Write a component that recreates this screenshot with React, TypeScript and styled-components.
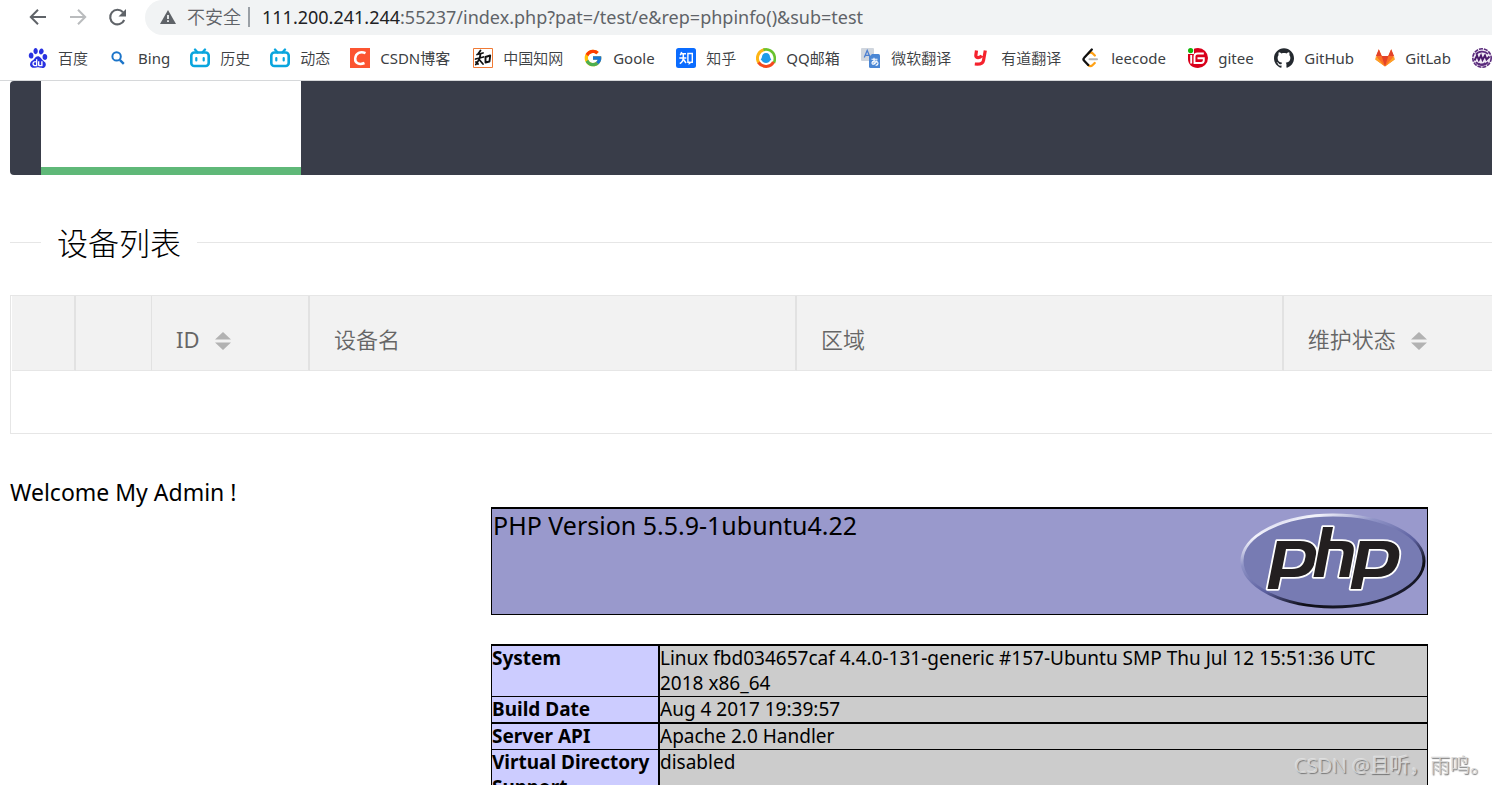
import React from "react";
import styled, { createGlobalStyle } from "styled-components";
import { FcGoogle } from "react-icons/fc";
import { SiBaidu, SiGithub } from "react-icons/si";

const GlobalStyle = createGlobalStyle`
  *, *::before, *::after { box-sizing: border-box; }
  body {
    margin: 0;
    background: #fff;
    color: #000;
    font-family: "Noto Sans", "Noto Sans CJK SC", sans-serif;
  }
`;

const Window = styled.div`
  display: flex;
  flex-direction: column;
  height: 100vh;
  overflow: hidden;
  position: relative;
`;

const AddressRow = styled.header`
  display: flex;
  align-items: center;
  flex: none;
  height: 35px;
  padding-left: 28px;
  gap: 20px;
`;

const ToolButton = styled.button<{ $dim?: boolean }>`
  display: flex;
  width: 20px;
  height: 20px;
  padding: 0;
  border: 0;
  background: none;
  color: ${(p) => (p.$dim ? "#babcbe" : "#5f6368")};
`;

const Omnibox = styled.div`
  display: flex;
  align-items: center;
  flex: 1;
  align-self: stretch;
  min-width: 0;
  margin-left: -3px;
  padding: 0 0 2px 14px;
  border-radius: 18px 0 0 18px;
  background: #f1f3f4;
  color: #5f6368;
  font-size: 18px;
  line-height: 24px;
  white-space: nowrap;
`;

const Security = styled.button`
  display: flex;
  align-items: center;
  gap: 10px;
  padding: 0 7px 0 0;
  border: 0;
  border-right: 2px solid #9aa0a6;
  height: 20px;
  background: none;
  color: inherit;
  font: inherit;
  font-weight: 350;
`;

const Url = styled.div`
  margin-left: 12px;
  outline: 0;
`;

const Host = styled.span`
  color: #202124;
`;

const Bookmarks = styled.nav`
  display: flex;
  align-items: center;
  flex: none;
  gap: 20px;
  height: 46px;
  padding-left: 28px;
  border-bottom: 1px solid #d6d8da;
  overflow: hidden;
`;

const Bookmark = styled.a`
  display: flex;
  align-items: center;
  flex: none;
  gap: 10px;
  color: #3c4043;
  font-size: 15px;
  line-height: 20px;
  text-decoration: none;
  white-space: nowrap;

  svg { flex: none; width: 20px; height: 20px; }
`;

const BookmarkLabel = styled.span<{ $width: number; $latin: boolean }>`
  min-width: ${(p) => p.$width}px;
  font-weight: ${(p) => (p.$latin ? 400 : 350)};
`;

const Page = styled.main`
  flex: 1;
  min-height: 0;
  padding-left: 10px;
  overflow: hidden;
`;

const NavBar = styled.div`
  display: flex;
  height: 94px;
  padding-left: 31px;
  border-radius: 4px 0 0 4px;
  background: #393d49;
`;

const NavTab = styled.div`
  width: 260px;
  border-bottom: 8px solid #5fb878;
  background: #fff;
`;

const SectionTitle = styled.h2`
  display: flex;
  align-items: center;
  gap: 16px;
  margin: 47px 0 0;
  height: 41px;
  font-size: 31px;
  font-weight: 300;
  line-height: 40px;

  &::before, &::after { content: ""; height: 1px; background: #e6e6e6; }
  &::before { width: 31px; }
  &::after { flex: 1; }
`;

const DeviceFrame = styled.section`
  height: 139px;
  margin-top: 32px;
  padding-left: 1px;
  border: 1px solid #e6e6e6;
  border-right: 0;
`;

const DeviceTable = styled.table`
  width: 100%;
  table-layout: fixed;
  border-spacing: 0;
`;

const Head = styled.th<{ $line?: number; $latin?: boolean }>`
  height: 75px;
  padding: 12px 24px 0;
  border-right: ${(p) => p.$line ?? 2}px solid #e2e2e2;
  border-bottom: 1px solid #e6e6e6;
  background: #f2f2f2;
  color: #666;
  font-size: 22px;
  font-weight: ${(p) => (p.$latin ? 400 : 350)};
  line-height: 30px;
  text-align: left;
  white-space: nowrap;
`;

const HeadLabel = styled.span`
  display: flex;
  align-items: center;
  gap: 15px;
`;

const SortButton = styled.button`
  display: flex;
  padding: 4px 0 0;
  border: 0;
  background: none;
`;

const Welcome = styled.p`
  margin: 43px 0 0;
  font-size: 23px;
  line-height: 30px;
`;

const Info = styled.section`
  display: flex;
  flex-direction: column;
  align-items: flex-end;
  gap: 29px;
  padding-right: 64px;
`;

const Version = styled.div`
  display: flex;
  justify-content: space-between;
  width: 100%;
  max-width: 937px;
  height: 108px;
  padding-left: 1px;
  border: 1px solid #000;
  border-top-width: 2px;
  background: #9999cc;

  svg { margin-top: 4px; flex: none; }
`;

const VersionTitle = styled.h1`
  margin: 0;
  font-size: 25px;
  font-weight: 400;
  line-height: 32px;
`;

const InfoTable = styled.table`
  width: 100%;
  max-width: 937px;
  table-layout: fixed;
  border-spacing: 0;
  border: 1px solid #000;
  border-top-width: 2px;
  font-size: 19px;
  line-height: 25px;
  text-align: left;
`;

const InfoRow = styled.tr<{ $line: number }>`
  th, td {
    padding: 0;
    border-bottom: ${(p) => p.$line}px solid #000;
    vertical-align: top;
  }
  th { border-right: 2px solid #000; background: #ccccff; font-weight: 700; }
  td { padding-right: 8px; background: #cccccc; }
`;

const Watermark = styled.div`
  position: absolute;
  right: 2px;
  bottom: 5px;
  color: rgba(215, 215, 215, 0.9);
  font-size: 20px;
  font-weight: 350;
  line-height: 28px;
  text-shadow: 1px 1px 1px rgba(90, 90, 90, 0.8), -1px -1px 0 rgba(255, 255, 255, 0.4);
  white-space: nowrap;
`;

const Icon = ({ children }: { children: React.ReactNode }) => (
  <svg width="20" height="20" viewBox="0 0 20 20" fill="none" aria-hidden="true">
    {children}
  </svg>
);

const BackIcon = () => (
  <Icon><path d="M18 9H3M10 1.800 2.800 9l7.200 7.200" stroke="currentColor" strokeWidth="2" /></Icon>
);
const ForwardIcon = () => (
  <Icon><path d="M2 9h15M10 1.800l7.200 7.200-7.200 7.200" stroke="currentColor" strokeWidth="2" /></Icon>
);
const ReloadIcon = () => (
  <Icon>
    <path d="M16.200 12A7.300 7.300 0 1 1 15 4.300" stroke="currentColor" strokeWidth="2.100" />
    <path d="M18 1v7.500h-7.500z" fill="currentColor" />
  </Icon>
);
const WarningIcon = () => (
  <svg width="18" height="16" viewBox="0 0 18 16" aria-hidden="true">
    <path d="M9 1 17 15H1z" fill="#5f6368" />
    <path d="M8.1 6h1.800v4H8.100zM8.100 11.300h1.800v1.800H8.100z" fill="#f1f3f4" />
  </svg>
);

const SearchIcon = () => (
  <Icon>
    <circle cx="8.600" cy="8.400" r="4.200" stroke="#1b74c9" strokeWidth="2" />
    <path d="m11.800 11.800 4 4" stroke="#1b74c9" strokeWidth="2.400" />
  </Icon>
);
const TvIcon = () => (
  <Icon>
    <path d="m5 1.500 2.600 3M15 1.500l-2.600 3" stroke="#09a5de" strokeWidth="2.300" strokeLinecap="round" />
    <rect x="1.300" y="4.500" width="17.400" height="13.500" rx="3" stroke="#09a5de" strokeWidth="2.600" />
    <path d="M6.300 10v2.400M13.700 10v2.400" stroke="#09a5de" strokeWidth="2.200" strokeLinecap="round" />
  </Icon>
);
const CsdnIcon = () => (
  <Icon>
    <path d="M0 0h20v20H0z" fill="#fc5531" />
    <path d="M15.500 5.200C10.500 2.700 5.700 5.200 5.200 10.500c-.4 4.800 4.400 6.600 9.300 4.500" stroke="#fff" strokeWidth="2.500" />
  </Icon>
);
const CnkiIcon = () => (
  <Icon>
    <path d="M.5.5h19v19H.5z" fill="#fff" stroke="#f07a35" />
    <path d="M7.500 2.500 5 6M4 6.500l6-1.500M2.500 11l8-2M7.500 6 6.500 11 2.800 16.500M7 12.500l3 3.500M3 14l2 2" stroke="#111" strokeWidth="1.800" strokeLinecap="round" />
    <path d="m12.500 9 4.700-1.500-.7 6-4 1z" stroke="#111" strokeWidth="1.900" strokeLinejoin="round" />
  </Icon>
);
const ZhihuIcon = () => (
  <Icon>
    <rect width="20" height="20" rx="2.500" fill="#0a6cff" />
    <path d="M5.700 4 4.300 7.300M5 5.700h5M3.300 9.900h7M7.300 5.900v3.500c0 3-1.500 5-3.500 6.300M7.500 11.500l2.500 3.500" stroke="#fff" strokeWidth="1.500" />
    <path d="M11.900 5.500h4.400v8.700h-1.500l-1.500 1.300v-1.300h-1.400z" stroke="#fff" strokeWidth="1.400" />
  </Icon>
);
const QqMailIcon = () => (
  <Icon>
    <path d="M3 15A8.600 8.600 0 0 1 9 1.600" stroke="#fdb515" strokeWidth="3" />
    <path d="M7.500 1.800c5-1.500 10 1.700 11.100 6.700.5 2.300.2 4.500-.7 6.300" stroke="#69c22e" strokeWidth="2.600" />
    <path d="M17.500 14c-3 5.700-11 6-15 .5" stroke="#f5491d" strokeWidth="3" />
    <path d="M10 5c2.700 0 4 2 4 4l1.300 3-1.300.5c-.4 1.600-2 2.500-4 2.500s-3.600-.9-4-2.500L4.700 12 6 9c0-2 1.300-4 4-4z" fill="#1e9be9" />
  </Icon>
);
const TranslateIcon = () => (
  <Icon>
    <rect width="13" height="13" rx="1" fill="#d0d6de" />
    <path d="M3.300 9.500 6.200 2.500l3 7M4.300 7.300h4" stroke="#4c7fd0" strokeWidth="1.300" />
    <path d="M11 6h6.500A1.500 1.500 0 0 1 19 7.500V20H9.500A1.500 1.500 0 0 1 8 18.500V9z" fill="#4a86d4" />
    <path d="M10.500 11.300h6M13 9.700v7M16 12.500c-1 3.300-5 5-5 2.500 0-2.400 6-2.700 6 .2 0 1.500-1.400 2-2.500 2" stroke="#fff" strokeWidth="1.100" />
  </Icon>
);
const YoudaoIcon = () => (
  <Icon>
    <path d="M5.500 2.500 4.800 7.500c-.3 2.700 4.300 2.700 6 .2M14.300 2.500 12.500 12.500c-.6 3.700-4 4-8.700 3.500" stroke="#f5222d" strokeWidth="3.200" />
  </Icon>
);
const LeetcodeIcon = () => (
  <Icon>
    <path d="M7.500 5.500c1.500-1.400 3-1.300 4.300 0l2 2M7.200 17c1.300 1.300 3.200 1.300 4.500 0l2-2" stroke="#ffa116" strokeWidth="2.300" strokeLinecap="round" />
    <path d="m10.800 1.500-7.600 8.300c-.9.900-.9 2 0 2.900l4 4.300" stroke="#111" strokeWidth="2.300" strokeLinecap="round" />
    <path d="M8.500 11.300h7.500" stroke="#b3b3b3" strokeWidth="2" strokeLinecap="round" />
  </Icon>
);
const GiteeIcon = () => (
  <Icon>
    <path d="M6 .8C7.200.3 8.500 0 10 0a10 10 0 1 1 0 20C4 20 0 16 0 11V6h6z" fill="#d9001b" />
    <path d="M15.800 5.500H9.500a3 3 0 0 0-3 3V15h6.600a2.700 2.700 0 0 0 2.700-2.700V10.200H9.500M3.200 7v8.500" stroke="#fff" strokeWidth="1.900" />
    <circle cx="2.600" cy="2.600" r="2.600" fill="#13b50b" />
  </Icon>
);
const GitlabIcon = () => (
  <Icon>
    <path d="m10 18.500-9.600-7L3.800 1.300 6.800 8h6.400l3-6.700 3.400 10.200z" fill="#fc6d26" />
    <path d="M10 18.500 6.600 8h6.800z" fill="#e24329" />
    <path d="M3.800 1.300.9 8h5.800zM16.200 1.300 19.100 8h-5.800z" fill="#e24329" />
    <path d="m10 18.500-9.600-7L.9 8zM10 18.500l9.600-7L19.100 8z" fill="#fca326" />
  </Icon>
);
const SealIcon = () => (
  <Icon>
    <circle cx="10" cy="10" r="9.200" fill="#f1eaf5" stroke="#5a2b7c" strokeWidth="1.600" strokeDasharray="4 1" />
    <path d="M4 6.500C6 3 13 2.500 16 6M4 14c3 4 9 4 12 0M6.500 15.500c2.500 1.500 5 1.200 7-.5" stroke="#5a2b7c" strokeWidth="1.800" />
    <path d="M2.500 12.500 5 7.500l1.800 4.500L9 7.500l1.500 4.500L13 7.500l1.500 4 3-3" stroke="#4a1a6b" strokeWidth="1.900" />
  </Icon>
);

const SortIcon = () => (
  <svg width="16" height="18" viewBox="0 0 16 18" aria-hidden="true">
    <path d="M8 0l8 7.500H0zM0 10.500h16L8 18z" fill="#b2b2b2" />
  </svg>
);

const P_SHAPE =
  "M39 27H62C75 27 80 34 78 44C76 57 68 63 56 63H42.500L40 75H29.500ZM48 35 44.200 55H54C62 55 66 51 67 45C69 38 66 35 59 35Z";

const PhpLogo = () => (
  <svg width="187" height="98" viewBox="0 0 187 98" role="img" aria-label="php">
    <defs>
      <linearGradient id="rim" x1="0.15" y1="0" x2="0.85" y2="1">
        <stop offset="0" stopColor="#b4b7de" />
        <stop offset="0.12" stopColor="#f4f4fc" />
        <stop offset="0.3" stopColor="#8f93c6" />
        <stop offset="0.55" stopColor="#5c60a0" />
        <stop offset="0.75" stopColor="#0d0d14" />
        <stop offset="1" stopColor="#22233c" />
      </linearGradient>
    </defs>
    <ellipse cx="93" cy="48" rx="91" ry="46" fill="#777bb3" stroke="url(#rim)" strokeWidth="3" />
    <g
      transform="translate(-2 1)"
      fill="#231f20"
      fillRule="evenodd"
      stroke="#fff"
      strokeWidth="3.600"
      strokeLinejoin="round"
      paintOrder="stroke"
    >
      <path d={P_SHAPE} />
      <path d={P_SHAPE} transform="translate(83 0)" />
      <path d="M85 13H95L92.300 27H104C114 27 117 31 115.500 39L111 63H101L105.300 41C106 36 105 35 100 35H90.800L85.500 63H75.500Z" />
    </g>
  </svg>
);

const bookmarks: { icon: React.ReactNode; label: string; width: number }[] = [
  { icon: <SiBaidu color="#2932e1" />, label: "百度", width: 30 },
  { icon: <SearchIcon />, label: "Bing", width: 32 },
  { icon: <TvIcon />, label: "历史", width: 30 },
  { icon: <TvIcon />, label: "动态", width: 30 },
  { icon: <CsdnIcon />, label: "CSDN博客", width: 73 },
  { icon: <CnkiIcon />, label: "中国知网", width: 60 },
  { icon: <FcGoogle />, label: "Goole", width: 43 },
  { icon: <ZhihuIcon />, label: "知乎", width: 30 },
  { icon: <QqMailIcon />, label: "QQ邮箱", width: 55 },
  { icon: <TranslateIcon />, label: "微软翻译", width: 60 },
  { icon: <YoudaoIcon />, label: "有道翻译", width: 60 },
  { icon: <LeetcodeIcon />, label: "leecode", width: 57 },
  { icon: <GiteeIcon />, label: "gitee", width: 36 },
  { icon: <SiGithub color="#24292f" />, label: "GitHub", width: 51 },
  { icon: <GitlabIcon />, label: "GitLab", width: 47 },
];

const info = [
  { name: "System", value: "Linux fbd034657caf 4.4.0-131-generic #157-Ubuntu SMP Thu Jul 12 15:51:36 UTC 2018 x86_64", line: 1 },
  { name: "Build Date", value: "Aug 4 2017 19:39:57", line: 2 },
  { name: "Server API", value: "Apache 2.0 Handler", line: 1 },
  { name: "Virtual Directory Support", value: "disabled", line: 1 },
];

export default function App() {
  return (
    <Window>
      <GlobalStyle />
      <AddressRow>
        <ToolButton aria-label="后退"><BackIcon /></ToolButton>
        <ToolButton aria-label="前进" $dim><ForwardIcon /></ToolButton>
        <ToolButton aria-label="重新加载"><ReloadIcon /></ToolButton>
        <Omnibox>
          <Security><WarningIcon />不安全</Security>
          <Url role="textbox" aria-label="地址" contentEditable suppressContentEditableWarning spellCheck={false}>
            <Host>111.200.241.244</Host>:55237/index.php?pat=/test/e&amp;rep=phpinfo()&amp;sub=test
          </Url>
        </Omnibox>
      </AddressRow>
      <Bookmarks aria-label="书签">
        {bookmarks.map((b) => (
          <Bookmark href="#" key={b.label}>
            {b.icon}
            <BookmarkLabel $width={b.width} $latin={/[a-z]/i.test(b.label)}>{b.label}</BookmarkLabel>
          </Bookmark>
        ))}
        <Bookmark href="#" aria-label="书签"><SealIcon /></Bookmark>
      </Bookmarks>
      <Page>
        <NavBar><NavTab /></NavBar>
        <SectionTitle>设备列表</SectionTitle>
        <DeviceFrame>
          <DeviceTable>
            <colgroup>
              <col style={{ width: 64 }} />
              <col style={{ width: 76 }} />
              <col style={{ width: 158 }} />
              <col style={{ width: "32.9%" }} />
              <col style={{ width: "32.9%" }} />
              <col />
            </colgroup>
            <thead>
              <tr>
                <Head />
                <Head $line={1} />
                <Head $latin><HeadLabel>ID<SortButton aria-label="按 ID 排序"><SortIcon /></SortButton></HeadLabel></Head>
                <Head><HeadLabel>设备名</HeadLabel></Head>
                <Head><HeadLabel>区域</HeadLabel></Head>
                <Head $line={0}><HeadLabel>维护状态<SortButton aria-label="按维护状态排序"><SortIcon /></SortButton></HeadLabel></Head>
              </tr>
            </thead>
          </DeviceTable>
        </DeviceFrame>
        <Welcome>Welcome My Admin !</Welcome>
        <Info>
          <Version>
            <VersionTitle>PHP Version 5.5.9-1ubuntu4.22</VersionTitle>
            <PhpLogo />
          </Version>
          <InfoTable>
            <colgroup>
              <col style={{ width: 168 }} />
              <col />
            </colgroup>
            <tbody>
              {info.map((r) => (
                <InfoRow key={r.name} $line={r.line}>
                  <th scope="row">{r.name}</th>
                  <td>{r.value}</td>
                </InfoRow>
              ))}
            </tbody>
          </InfoTable>
        </Info>
      </Page>
      <Watermark>CSDN @且听，雨鸣。</Watermark>
    </Window>
  );
}
